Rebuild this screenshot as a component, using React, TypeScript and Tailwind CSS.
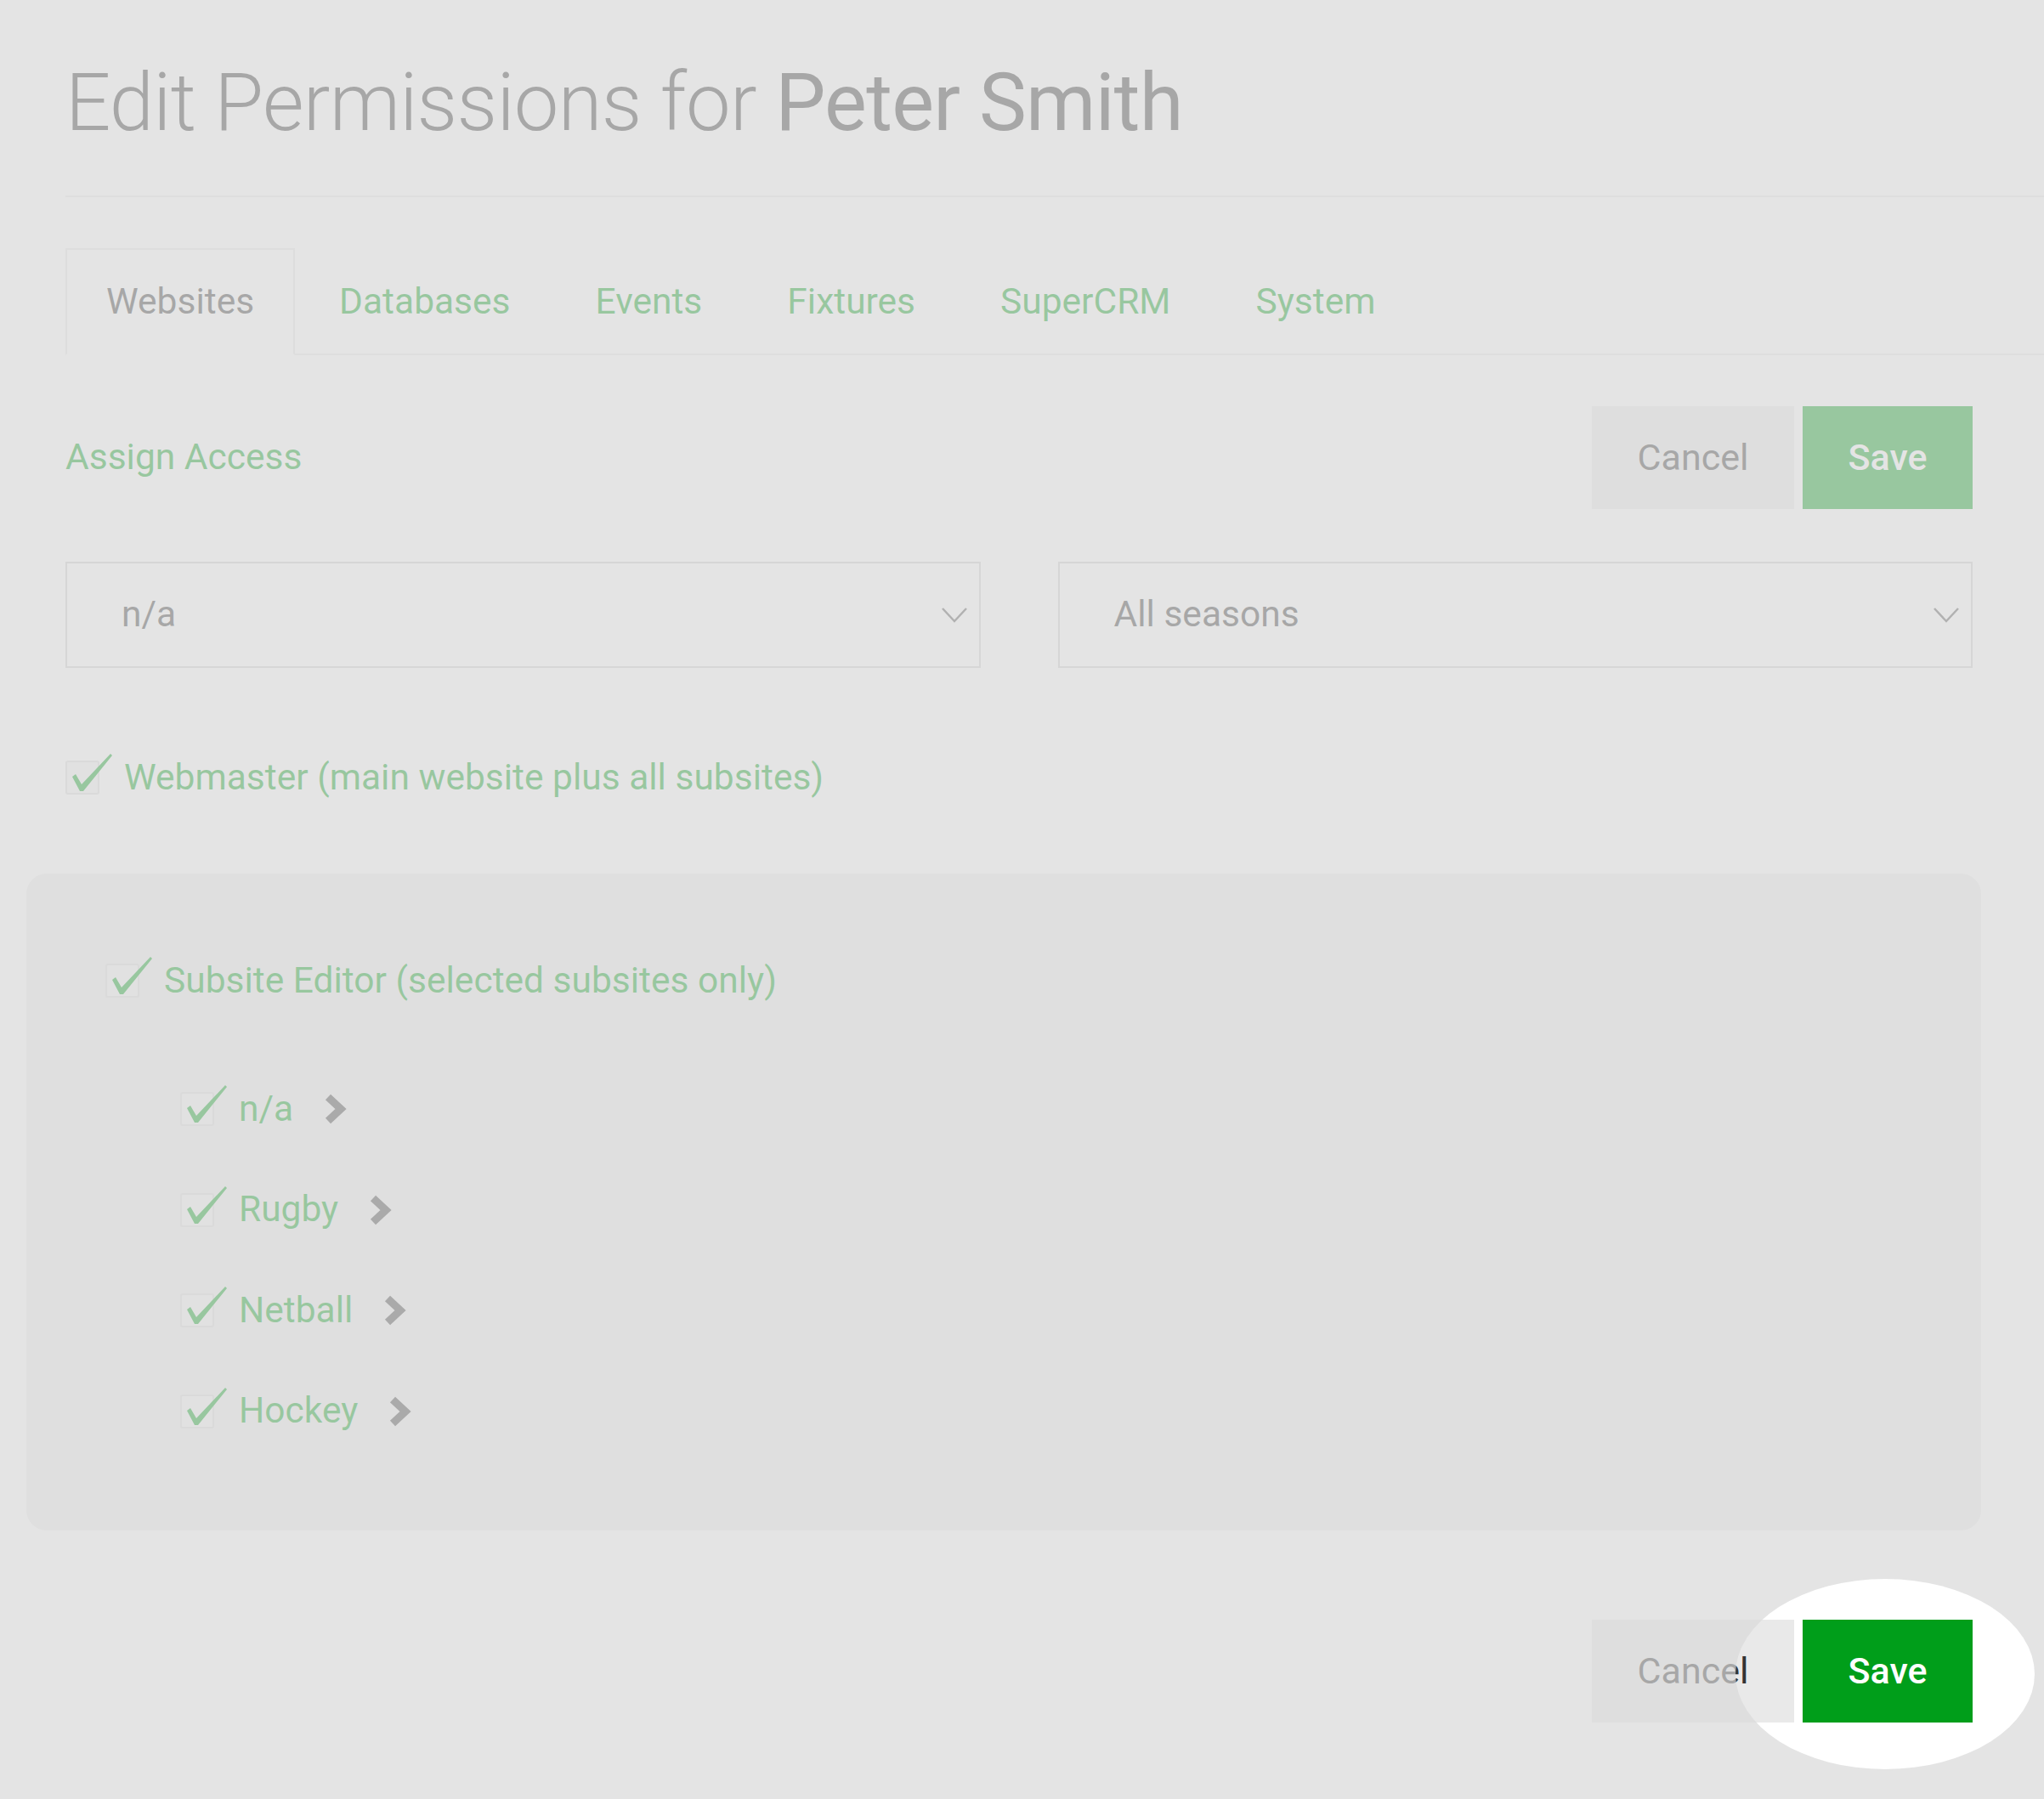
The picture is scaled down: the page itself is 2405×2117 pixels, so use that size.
import React from 'react';

// Tick used by the custom checkboxes, it overhangs the box to the top right
const Tick: React.FC = () => (
    <svg
        className="absolute left-0 top-[-14px] w-[58px] h-[54px] pointer-events-none"
        viewBox="0 0 58 54"
    >
        <path d="M6 31 L10 28 L17 40 L51 4 L53 6 L19 48 L15 48 Z" fill="#009e1a" />
    </svg>
);

interface CheckRowProps {
    label: string;
    chevron?: boolean;
}

const CheckRow: React.FC<CheckRowProps> = ({ label, chevron }) => (
    <div className="flex items-center h-[44px]">
        <div className="relative w-[40px] h-[40px] shrink-0 rounded-[3px] border-2 border-[#dcdcdc] bg-[#f3f3f3]">
            <Tick />
        </div>
        <span className="ml-[29px] text-[42.5px] leading-none text-[#009e1a] whitespace-nowrap">{label}</span>
        {chevron && (
            <svg className="ml-[36px] w-[28px] h-[38px]" viewBox="0 0 28 38">
                <polyline points="5,5 20,19 5,33" fill="none" stroke="#3d3d3d" strokeWidth="9" strokeLinejoin="miter" />
            </svg>
        )}
    </div>
);

const Select: React.FC<{ value: string }> = ({ value }) => (
    <div className="h-[125px] border-2 border-[#cfcfcf] bg-white pl-[64px] pr-[13px] flex items-center justify-between">
        <span className="text-[42.5px] leading-none text-[#333]">{value}</span>
        <svg className="w-[32px] h-[20px]" viewBox="0 0 32 20">
            <polyline points="2,2 16,17 30,2" fill="none" stroke="#555" strokeWidth="2.5" />
        </svg>
    </div>
);

const tabs = ['Websites', 'Databases', 'Events', 'Fixtures', 'SuperCRM', 'System'];
const subsites = ['n/a', 'Rugby', 'Netball', 'Hockey'];

const App: React.FC = () => {
    return (
        <div className="min-h-[2117px] bg-white text-[#333] font-[Roboto,'Liberation_Sans',sans-serif]">
            <div className="pl-[77px] pt-[66px] pb-[89px]">
                <h1 className="text-[94px] leading-[110px] font-light tracking-[-0.75px] whitespace-nowrap">
                    Edit Permissions for <span className="font-normal">Peter Smith</span>
                </h1>

                <div className="mt-[54px] h-[2px] bg-[#ececec]" />

                {/* Tabs */}
                <div className="mt-[60px] flex gap-[4px] border-b-2 border-[#e9e9e9]">
                    {tabs.map((tab, i) => (
                        <div
                            key={tab}
                            className={
                                i === 0
                                    ? 'h-[126px] -mb-[2px] px-[46px] flex items-center border-2 border-[#e6e6e6] border-b-white bg-white text-[42.5px] leading-none text-[#333]'
                                    : 'h-[126px] -mb-[2px] px-[46px] flex items-center border-2 border-transparent text-[42.5px] leading-none text-[#009e1a]'
                            }
                        >
                            {tab}
                        </div>
                    ))}
                </div>

                {/* Header actions */}
                <div className="mt-[60px] mr-[84px] flex items-center justify-between">
                    <span className="text-[42.5px] leading-none text-[#009e1a]">Assign Access</span>
                    <div className="flex gap-[10px]">
                        <button className="w-[238px] h-[121px] bg-[#e9e9e9] text-[43px] text-[#333]">Cancel</button>
                        <button className="w-[200px] h-[121px] bg-[#009e1a] text-[43px] font-medium text-white">Save</button>
                    </div>
                </div>

                <div className="mt-[62px] mr-[84px] grid grid-cols-2 gap-[91px]">
                    <Select value="n/a" />
                    <Select value="All seasons" />
                </div>

                <div className="mt-[107px]">
                    <CheckRow label="Webmaster (main website plus all subsites)" />
                </div>

                {/* Subsite editor block */}
                <div className="mt-[91px] -ml-[46px] mr-[74px] rounded-[24px] bg-[#eeeeee] pl-[93px] pt-[104px] pb-[118px]">
                    <CheckRow label="Subsite Editor (selected subsites only)" />
                    <div className="ml-[88px] mt-[107px] flex flex-col gap-[74.5px]">
                        {subsites.map(s => (
                            <CheckRow key={s} label={s} chevron />
                        ))}
                    </div>
                </div>

                {/* Footer actions, Save is spotlighted */}
                <div className="mt-[105px] mr-[84px] flex justify-end gap-[10px]">
                    <button className="w-[238px] h-[121px] bg-[#e9e9e9] text-[43px] text-[#333]">Cancel</button>
                    <div className="relative">
                        <button className="w-[200px] h-[121px] bg-[#009e1a] text-[43px] font-medium text-white">Save</button>
                        <div className="absolute left-[-79px] top-[-48px] w-[352px] h-[224px] rounded-[50%] shadow-[0_0_0_4000px_rgba(217,217,217,0.7)] pointer-events-none z-10" />
                    </div>
                </div>
            </div>
        </div>
    );
};

export default App;
